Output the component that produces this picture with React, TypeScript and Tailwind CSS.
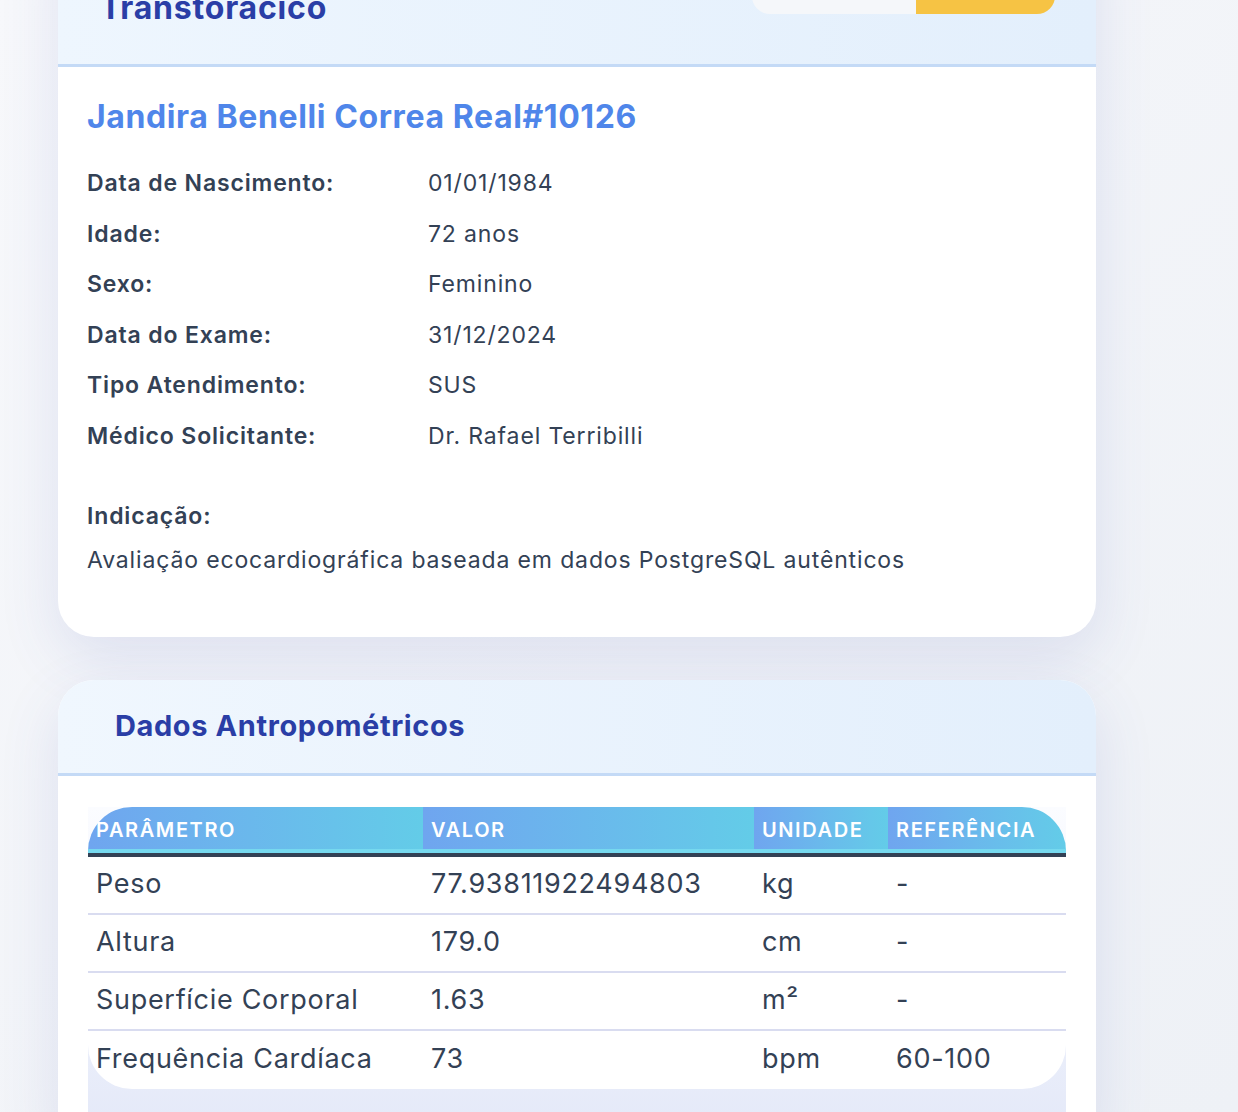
import React from "react";

const info: [string, string][] = [
  ["Data de Nascimento:", "01/01/1984"],
  ["Idade:", "72 anos"],
  ["Sexo:", "Feminino"],
  ["Data do Exame:", "31/12/2024"],
  ["Tipo Atendimento:", "SUS"],
  ["Médico Solicitante:", "Dr. Rafael Terribilli"],
];

const rows: [string, string, string, string][] = [
  ["Peso", "77.93811922494803", "kg", "-"],
  ["Altura", "179.0", "cm", "-"],
  ["Superfície Corporal", "1.63", "m²", "-"],
  ["Frequência Cardíaca", "73", "bpm", "60-100"],
];

export default function App() {
  return (
    <div className="h-[1112px] w-full overflow-hidden bg-gradient-to-br from-[#f7f8fb] to-[#eef1f6] font-['Inter',sans-serif] text-[#334155]">
      <div className="ml-[58px] mt-[-132px] w-[1038px] pt-10">
        {/* Card 1 */}
        <section className="overflow-hidden rounded-[36px] bg-white shadow-[0_20px_60px_rgba(71,85,180,0.13)]">
          <header className="flex items-center justify-between border-b-[3px] border-[#c4daf6] bg-gradient-to-r from-[#eef6fe] to-[#e3effc] pb-[36px] pl-[42px] pr-[41px] pt-[40px]">
            <h1 className="max-w-[360px] text-[32px] font-bold leading-[40px] tracking-[0.8px] text-[#2a3ea6]">
              Ecocardiograma Transtorácico
            </h1>
            <div className="flex h-[52px] overflow-hidden rounded-[18px]">
              <button className="w-[164px] bg-[#f5f7fa] text-[18px] font-semibold text-[#334155]">
                Voltar
              </button>
              <button className="w-[139px] bg-[#f6c344] text-[18px] font-semibold text-[#1f2937]">
                Editar
              </button>
            </div>
          </header>
          <div className="px-[29px] pb-[60px] pt-[30px]">
            <h2 className="text-[32px] font-bold leading-[40px] tracking-[0.6px] text-[#4f86ea]">
              Jandira Benelli Correa Real#10126
            </h2>
            <div className="mt-[21px]">
              {info.map(([k, v]) => (
                <div key={k} className="flex h-[50.6px] items-center text-[23px] tracking-[0.85px]">
                  <span className="w-[341px] font-semibold">{k}</span>
                  <span>{v}</span>
                </div>
              ))}
            </div>
            <div className="mt-[38px] text-[23px] leading-[33px] tracking-[0.85px]">
              <div className="font-semibold">Indicação:</div>
              <p className="mt-[11px]">
                Avaliação ecocardiográfica baseada em dados PostgreSQL autênticos
              </p>
            </div>
          </div>
        </section>

        {/* Card 2 */}
        <section className="mt-[43px] overflow-hidden rounded-[36px] bg-white shadow-[0_20px_60px_rgba(71,85,180,0.13)]">
          <header className="flex h-[96px] items-center border-b-[3px] border-[#c4daf6] bg-gradient-to-r from-[#f0f7fe] to-[#e3effc] pl-[57px]">
            <h2 className="text-[29px] font-bold tracking-[0.6px] text-[#2a3ea6]">Dados Antropométricos</h2>
          </header>
          <div className="px-[30px] pt-[31px]">
            <div className="h-[340px] bg-gradient-to-b from-[#fbfcff] to-[#e3e8f8]">
              <table className="w-full table-fixed border-separate border-spacing-0 text-left">
                <colgroup>
                  <col className="w-[335px]" />
                  <col className="w-[331px]" />
                  <col className="w-[134px]" />
                  <col className="w-[178px]" />
                </colgroup>
                <thead>
                  <tr>
                    {["PARÂMETRO", "VALOR", "UNIDADE", "REFERÊNCIA"].map((h, i) => (
                      <th
                        key={h}
                        className={`h-[50px] border-b-4 border-[#334155] bg-gradient-to-r from-[#6fa5ef] to-[#63cce8] px-[8px] pt-0 align-middle text-[20px] font-semibold tracking-[0.08em] text-white shadow-[inset_0_-4px_0_#76d9ef] ${
                          i === 0 ? "rounded-tl-[44px]" : ""
                        } ${i === 3 ? "rounded-tr-[44px]" : ""}`}
                      >
                        {h}
                      </th>
                    ))}
                  </tr>
                </thead>
                <tbody>
                  {rows.map((r, ri) => {
                    const last = ri === rows.length - 1;
                    return (
                      <tr key={r[0]}>
                        {r.map((c, ci) => (
                          <td
                            key={ci}
                            className={`h-[58px] bg-white px-[8px] text-[27px] tracking-[0.7px] ${
                              last ? "" : "border-b-2 border-[#d9dcf0]"
                            } ${last && ci === 0 ? "rounded-bl-[44px]" : ""} ${
                              last && ci === 3 ? "rounded-br-[44px]" : ""
                            }`}
                          >
                            {c}
                          </td>
                        ))}
                      </tr>
                    );
                  })}
                </tbody>
              </table>
            </div>
          </div>
        </section>
      </div>
    </div>
  );
}
